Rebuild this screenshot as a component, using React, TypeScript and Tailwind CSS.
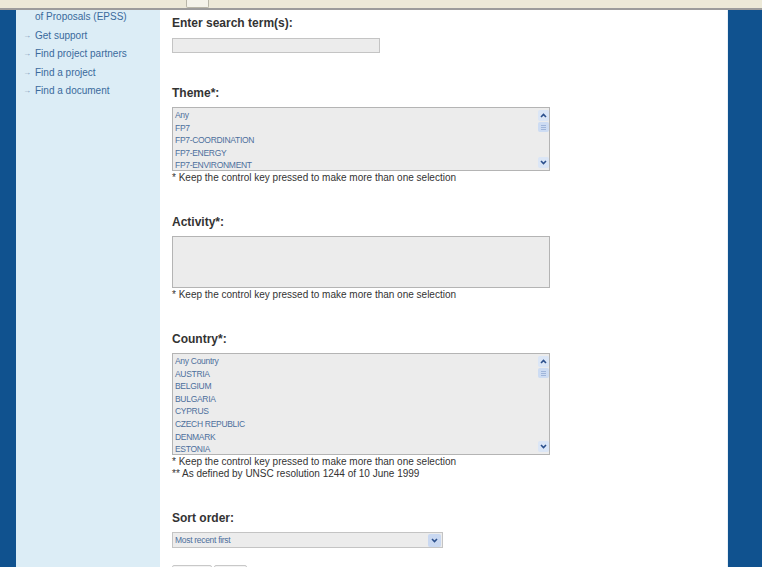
import React from "react";

const themes = ["Any", "FP7", "FP7-COORDINATION", "FP7-ENERGY", "FP7-ENVIRONMENT"];
const countries = [
  "Any Country",
  "AUSTRIA",
  "BELGIUM",
  "BULGARIA",
  "CYPRUS",
  "CZECH REPUBLIC",
  "DENMARK",
  "ESTONIA",
];
const sideLinks = ["Get support", "Find project partners", "Find a project", "Find a document"];

const font = { fontFamily: '"Liberation Sans", Arial, sans-serif' };

function Chevron({ up }: { up?: boolean }) {
  return (
    <svg width="7" height="5" viewBox="0 0 7 5">
      <path
        d={up ? "M1 4 L3.5 1.5 L6 4" : "M1 1 L3.5 3.5 L6 1"}
        fill="none"
        stroke="#2b4f8c"
        strokeWidth="1.6"
      />
    </svg>
  );
}

function ScrollBar() {
  return (
    <div className="flex w-[12px] flex-col items-center py-[2px]">
      <div className="flex h-[11px] w-[11px] items-center justify-center rounded-[2px] bg-[#dbe6f6]">
        <Chevron up />
      </div>
      <div className="mt-[1px] flex h-[10px] w-[11px] flex-col items-center justify-center gap-[1px] rounded-[2px] bg-[#cddcf3]">
        <div className="h-[1px] w-[5px] bg-[#9fb5da]" />
        <div className="h-[1px] w-[5px] bg-[#9fb5da]" />
        <div className="h-[1px] w-[5px] bg-[#9fb5da]" />
      </div>
      <div className="flex-1" />
      <div className="flex h-[11px] w-[11px] items-center justify-center rounded-[2px] bg-[#dbe6f6]">
        <Chevron />
      </div>
    </div>
  );
}

function ListBox({ items, h }: { items: string[]; h: string }) {
  return (
    <div className={`mt-[6px] flex w-[378px] border border-[#b4b4b4] bg-[#ececec] ${h}`}>
      <div className="flex-1 overflow-hidden pl-[2px] pt-[1px]">
        {items.map((it) => (
          <div key={it} className="text-[8.5px] leading-[12.6px] tracking-[-0.3px] text-[#4c6f9c]">
            {it}
          </div>
        ))}
      </div>
      {items.length > 0 && <ScrollBar />}
    </div>
  );
}

function Heading({ children, mt }: { children: React.ReactNode; mt: string }) {
  return <div className={`${mt} text-[12px] font-bold leading-[16px] text-[#333]`}>{children}</div>;
}

function Note({ children }: { children: React.ReactNode }) {
  return <div className="text-[10px] leading-[12px] text-[#333]">{children}</div>;
}

export default function App() {
  return (
    <div className="flex h-[567px] w-[762px] flex-col overflow-hidden bg-white" style={font}>
      <div className="relative h-[10px] shrink-0 border-b-2 border-[#9c9c9c] bg-[#ece9d8]">
        <div className="absolute left-[186px] top-0 h-[8px] w-[23px] rounded-b-[2px] border border-t-0 border-[#b8b6a8] bg-[#f4f3ea]" />
      </div>
      <div className="flex flex-1">
        <div className="w-[16px] bg-[#10528f]" />
        <div className="w-[144px] bg-[#dcedf6] pl-[7px]">
          <div className="pl-[12px] text-[10px] leading-[14px] text-[#3a6a9c]">of Proposals (EPSS)</div>
          <div className="mt-[3px]">
            {sideLinks.map((l) => (
              <div key={l} className="flex items-center text-[10px] leading-[18.3px] text-[#3a6a9c]">
                <span className="w-[12px] text-[8px] text-[#7f9bb8]">→</span>
                {l}
              </div>
            ))}
          </div>
        </div>
        <div className="w-[567px] pl-[12px]">
          <Heading mt="mt-[5px]">Enter search term(s):</Heading>
          <div className="mt-[7px] h-[15px] w-[208px] border border-[#c4c4c4] bg-[#ececec]" />

          <Heading mt="mt-[32px]">Theme*:</Heading>
          <ListBox items={themes} h="h-[64px]" />
          <div className="mt-[1px]">
            <Note>* Keep the control key pressed to make more than one selection</Note>
          </div>

          <Heading mt="mt-[30px]">Activity*:</Heading>
          <ListBox items={[]} h="h-[52px]" />
          <div className="mt-[1px]">
            <Note>* Keep the control key pressed to make more than one selection</Note>
          </div>

          <Heading mt="mt-[30px]">Country*:</Heading>
          <ListBox items={countries} h="h-[102px]" />
          <div className="mt-[1px]">
            <Note>* Keep the control key pressed to make more than one selection</Note>
            <Note>** As defined by UNSC resolution 1244 of 10 June 1999</Note>
          </div>

          <Heading mt="mt-[30px]">Sort order:</Heading>
          <div className="mt-[6px] flex h-[16px] w-[271px] items-center border border-[#c4c4c4] bg-[#ececec] pl-[2px] pr-[1px]">
            <span className="flex-1 text-[8.5px] tracking-[-0.3px] text-[#4c6f9c]">Most recent first</span>
            <div className="flex h-[13px] w-[13px] items-center justify-center rounded-[2px] bg-[#c9d8f1]">
              <Chevron />
            </div>
          </div>
          <div className="mt-[17px] flex gap-[2px]">
            <div className="h-[12px] w-[40px] rounded-[2px] border border-[#c8c8c8] bg-[#f3f3f3]" />
            <div className="h-[12px] w-[33px] rounded-[2px] border border-[#c8c8c8] bg-[#f3f3f3]" />
          </div>
        </div>
        <div className="w-[1px] bg-[#e8f0f6]" />
        <div className="flex-1 bg-[#10528f]" />
      </div>
    </div>
  );
}
